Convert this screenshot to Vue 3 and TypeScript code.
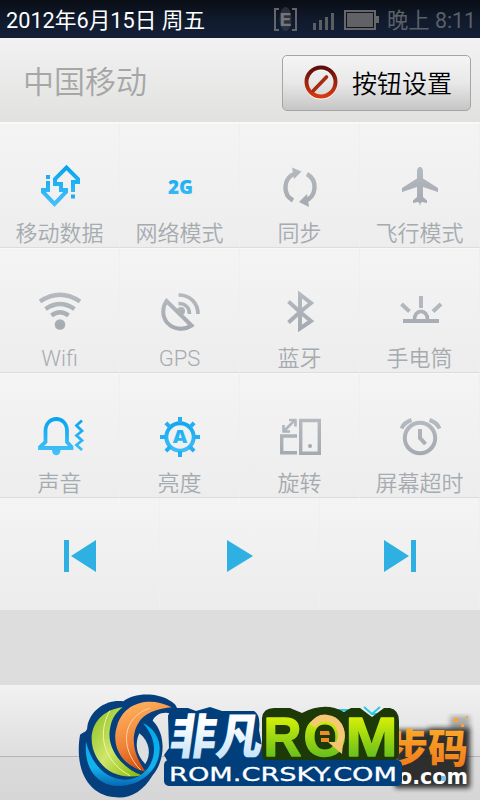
<script setup lang="ts">
import { ref } from 'vue'

interface Toggle {
	icon: string
	label: string
	active: boolean
}

const toggles = ref<Toggle[]>([
	{ icon: 'data', label: '移动数据', active: true },
	{ icon: 'network', label: '网络模式', active: true },
	{ icon: 'sync', label: '同步', active: false },
	{ icon: 'plane', label: '飞行模式', active: false },
	{ icon: 'wifi', label: 'Wifi', active: false },
	{ icon: 'gps', label: 'GPS', active: false },
	{ icon: 'bluetooth', label: '蓝牙', active: false },
	{ icon: 'torch', label: '手电筒', active: false },
	{ icon: 'sound', label: '声音', active: true },
	{ icon: 'brightness', label: '亮度', active: true },
	{ icon: 'rotate', label: '旋转', active: false },
	{ icon: 'timeout', label: '屏幕超时', active: false },
])

const teeth = [0, 45, 90, 135, 180, 225, 270, 315]

function toggle(item: Toggle) {
	item.active = !item.active
}
</script>

<template>
  <div class="screen">
    <div class="status">
      <span class="date">2012年6月15日 周五</span>
      <div class="indicators">
        <svg class="signals" width="106" height="26" viewBox="0 0 106 26">
          <path d="M5 3H1V24H5M18 3H22V24H18" fill="none" stroke="#62656a" stroke-width="2" />
          <ellipse cx="11.500" cy="13" rx="6" ry="12" fill="#3c414b" opacity=".6" />
          <text x="11.500" y="19.500" text-anchor="middle" class="edge">E</text>
          <path d="M39 17h3v7h-3zM45 14h3v10h-3zM51 11h3v13h-3zM57 7h3v17h-3z" fill="#5a5d62" />
          <rect x="71" y="5" width="30" height="18" fill="#101318" stroke="#65676a" stroke-width="2" />
          <rect x="73" y="7" width="26" height="14" fill="#606265" />
          <path d="M102 10h3v7h-3z" fill="#65676a" />
        </svg>
        <span class="time">晚上 8:11</span>
      </div>
    </div>

    <div class="header">
      <span class="carrier">中国移动</span>
      <button class="settings">
        <svg width="36" height="36" viewBox="0 0 36 36">
          <defs>
            <linearGradient id="ban" x1="0" y1="0" x2="0" y2="1">
              <stop offset="0" stop-color="#5c0d0d" />
              <stop offset="1" stop-color="#d63a10" />
            </linearGradient>
          </defs>
          <circle cx="18" cy="19" r="14.500" fill="none" stroke="#fff" stroke-width="4" />
          <circle cx="18" cy="18" r="14.500" fill="none" stroke="url(#ban)" stroke-width="4" />
          <path d="M10.500 26.500L23.500 13" stroke="#a62a14" stroke-width="3.600" stroke-linecap="round" />
        </svg>
        <span>按钮设置</span>
      </button>
    </div>

    <div class="grid">
      <div
        v-for="item in toggles"
        :key="item.icon"
        :class="['cell', { active: item.active }]"
        @click="toggle(item)"
      >
        <svg class="icon" width="60" height="50" viewBox="30 35 60 50">
          <defs>
            <linearGradient :id="`tint-${item.icon}`" gradientUnits="userSpaceOnUse" x1="0" y1="41" x2="0" y2="82">
              <stop offset="0" :stop-color="item.active ? '#06a3ee' : '#b5bbc0'" />
              <stop offset="1" :stop-color="item.active ? '#48c3fa' : '#a3a9af'" />
            </linearGradient>
          </defs>
          <g :stroke="`url(#tint-${item.icon})`" fill="none" stroke-width="4">
            <g v-if="item.icon === 'data'">
              <path d="M48 56V65H43V67L54.500 79L66 67V65H61V59H55V54L66.500 42.500L78 54V57H73V67" />
              <path d="M46 52h4M71 71.500h4" stroke="#22acf0" />
            </g>
            <text v-else-if="item.icon === 'network'" x="60.500" y="69" text-anchor="middle" class="glyph net" textLength="25" lengthAdjust="spacingAndGlyphs" :fill="`url(#tint-${item.icon})`">2G</text>
            <g v-else-if="item.icon === 'sync'">
              <path d="M53 75.500A15 15 0 0 1 55 48.500M67 49A15 15 0 0 1 65 76" stroke-width="4.400" />
              <path d="M52 42.500L61.500 46.500L54 54ZM69 82L59 77L67 69Z" stroke="none" :fill="`url(#tint-${item.icon})`" />
            </g>
            <path
              v-else-if="item.icon === 'plane'"
              d="M60 42C57.800 42 57 44.500 57 47V53.500L42 63V67L57 62V72L53 75.500V78L58 77L59.300 78L60 81L60.700 78L62 77L67 78V75.500L63 72V62L78 67V63L63 53.500V47C63 44.500 62.200 42 60 42Z"
              stroke="none"
              :fill="`url(#tint-${item.icon})`"
            />
            <g v-else-if="item.icon === 'wifi'">
              <path d="M40 51.500Q60 38 80 51.500M45.500 59Q60 49 74.500 59M51.500 65.500Q60 59 68.500 65.500" stroke-width="4.300" />
              <circle cx="60" cy="74.500" r="5.300" stroke="none" :fill="`url(#tint-${item.icon})`" />
            </g>
            <g v-else-if="item.icon === 'gps'">
              <path d="M46.500 51L71.500 75.500C63 81 53 79 47.500 73C41.500 66 42.500 57 46.500 51Z" />
              <path d="M58.500 45C70 45 78 53 78 64M58.500 53.500C65 53.500 69.500 57.500 69.500 64" stroke-width="3.600" />
              <circle cx="61" cy="61" r="2" />
            </g>
            <path v-else-if="item.icon === 'bluetooth'" d="M48.500 51.500L60 62L71 71L60 78.500V44.500L71 53L60 62L48.500 72.500" />
            <g v-else-if="item.icon === 'torch'">
              <path d="M61 46V58M41.500 54L49.500 61.500M81 54L73 61.500" stroke="#b2b8bd" />
              <path d="M43 71H79" />
              <path d="M54.500 70C54 58.500 68 58.500 67.500 70" stroke-width="3.600" />
            </g>
            <g v-else-if="item.icon === 'sound'">
              <path d="M40 73V72L45.500 67V56C45.500 40 67 40 67 56V67L71.500 72V73Z" stroke-width="3.800" />
              <path d="M52 75H60.500C60.500 82 52 82 52 75Z" stroke="none" :fill="`url(#tint-${item.icon})`" />
              <path d="M82 45.500L76.500 50.500L82 56L76.500 60.500L82 65.500L76.500 70L82 75" stroke-width="2.800" />
            </g>
            <g v-else-if="item.icon === 'brightness'">
              <circle cx="60" cy="62" r="13.700" />
              <path v-for="angle in teeth" :key="angle" d="M60 42V48" stroke="#25aef2" :transform="`rotate(${angle} 60 62)`" />
              <text x="60" y="68" text-anchor="middle" class="glyph auto" textLength="14.500" lengthAdjust="spacingAndGlyphs" :fill="`url(#tint-${item.icon})`">A</text>
            </g>
            <g v-else-if="item.icon === 'rotate'" stroke-width="3.400">
              <path d="M60.700 45.500H79.300V78.300H60.700ZM57 61H41.700V77.800H57" />
              <path d="M45 55L54 46M49 45H55.500V51.500M43.500 50V56.500H50" stroke-width="2.600" />
              <circle cx="70" cy="71" r="2" stroke="none" fill="#a3a9af" />
            </g>
            <g v-else>
              <circle cx="60" cy="63" r="15.200" />
              <path d="M60 54V63L65.500 69" />
              <path d="M41.500 53.500Q44 47.500 51.500 45M79.500 53.500Q77 47.500 69.500 45" />
            </g>
          </g>
        </svg>
        <span class="label">{{ item.label }}</span>
      </div>
    </div>

    <div class="media">
      <div class="control">
        <svg width="34" height="32" viewBox="0 0 34 32"><path d="M1 0h5v32H1zM33 0v32L8 16z" /></svg>
      </div>
      <div class="control">
        <svg width="26" height="32" viewBox="0 0 26 32"><path d="M0 0v32l26-16z" /></svg>
      </div>
      <div class="control">
        <svg width="34" height="32" viewBox="0 0 34 32"><path d="M28 0h5v32h-5zM1 0v32l25-16z" /></svg>
      </div>
    </div>

    <div class="gap" />

    <div class="bottom">
      <div class="bottomTop" />
      <svg class="brand" width="420" height="120" viewBox="60 680 420 120">
        <defs>
          <linearGradient id="ice" x1="0" y1="0" x2="0" y2="1">
            <stop offset=".35" stop-color="#fff" />
            <stop offset="1" stop-color="#b5dbf5" />
          </linearGradient>
          <linearGradient id="lime" gradientUnits="userSpaceOnUse" x1="0" y1="716" x2="0" y2="757">
            <stop offset="0" stop-color="#d9f206" />
            <stop offset="1" stop-color="#66bf1c" />
          </linearGradient>
          <linearGradient id="leaf" x1="0" y1="0" x2="1" y2="1">
            <stop offset="0" stop-color="#8abf20" />
            <stop offset=".5" stop-color="#cfe66a" />
            <stop offset="1" stop-color="#83b800" />
          </linearGradient>
          <linearGradient id="flame" x1=".3" y1="0" x2=".6" y2="1">
            <stop offset="0" stop-color="#ffb15e" />
            <stop offset=".55" stop-color="#ef8238" />
            <stop offset="1" stop-color="#c94407" />
          </linearGradient>
          <linearGradient id="sea" x1="0" y1="0" x2="0" y2="1">
            <stop offset="0" stop-color="#00a9e8" />
            <stop offset=".7" stop-color="#12b4ed" />
            <stop offset="1" stop-color="#0667b2" />
          </linearGradient>
          <linearGradient id="amber" x1="0" y1="0" x2="0" y2="1">
            <stop offset="0" stop-color="#ffb52d" />
            <stop offset="1" stop-color="#ee7216" />
          </linearGradient>
          <filter id="soft" x="-20%" y="-20%" width="140%" height="140%">
            <feGaussianBlur stdDeviation="2.500" />
          </filter>
        </defs>

        <!-- lower wordmark, partly hidden by the front one -->
        <path d="M334 710H356M364 707L372 714L380 707M371 714H388" stroke="#22ccec" stroke-width="2" fill="none" />
        <path d="M450 716H470V730H450Z" fill="#222" opacity=".3" filter="url(#soft)" />
        <path d="M395 730H425L431 728H470V788H395Z" fill="#1b1b1b" opacity=".9" filter="url(#soft)" />
        <text x="388" y="763" class="cjk back" fill="url(#amber)" textLength="80" lengthAdjust="spacingAndGlyphs">步码</text>
        <path d="M454 718h4v4h-4zM461 724h3v3h-3zM466 716h2v2h-2z" fill="#f7a42d" />
        <text x="398" y="784" class="domain" textLength="70" lengthAdjust="spacingAndGlyphs">o.com</text>
        <rect x="441.500" y="776" width="4" height="5" fill="#62caff" />

        <!-- swirl -->
        <g transform="translate(60 680) scale(.3333)">
          <path d="M60 165C68 155 82 158 82 140C90 90 140 57 190 64C220 40 285 35 330 62C362 78 358 112 330 100C305 94 285 106 278 122C318 160 318 240 277 287C250 335 205 357 170 352C90 350 42 275 60 165Z" fill="#053f7d" />
          <path d="M238 160C270 185 274 225 256 252C228 225 224 190 238 160Z" fill="#dedfe0" />
          <path d="M78 185C70 275 120 322 185 318C255 312 302 260 299 200C296 165 272 138 249 130C290 175 290 225 265 263C235 303 185 308 145 286C110 265 90 230 78 185Z" fill="url(#sea)" />
          <path d="M188 82C110 92 80 155 102 215C125 272 175 300 245 286C190 267 135 205 151 140C157 112 170 96 188 82Z" fill="url(#leaf)" />
          <path d="M150 92C110 160 130 245 210 287" fill="none" stroke="#eef5a5" stroke-width="3" />
          <path d="M335 82C275 50 195 62 172 135C148 205 195 263 257 275C220 225 206 165 243 118C265 94 300 86 335 82Z" fill="url(#flame)" />
          <path d="M270 84C185 112 178 205 242 270" fill="none" stroke="#ffd2a0" stroke-width="3" />
        </g>

        <!-- front wordmark -->
        <path d="M176 708H188L196 711L210 707L222 711H254Q261 715 259 730L265 762H168L164 755L169 748L168 716Q170 709 176 708Z" fill="#003e7c" />
        <text x="168" y="754" transform="translate(168 754) skewX(-8) translate(-168 -754)" class="cjk front" fill="url(#ice)" textLength="93" lengthAdjust="spacingAndGlyphs">非凡</text>
        <path d="M262 718Q263 708 274 708H290L302 713Q325 701 344 712L351 708H360L372 717L384 708H390Q399 710 399 721V754Q398 761 390 762H268Q261 760 262 752Z" fill="#1e3908" />
        <g class="rom">
          <text x="263.500" y="756" textLength="38" lengthAdjust="spacingAndGlyphs">R</text>
          <text x="303.500" y="756" textLength="43" lengthAdjust="spacingAndGlyphs">O</text>
          <text x="345.500" y="756" textLength="52" lengthAdjust="spacingAndGlyphs">M</text>
        </g>
        <path d="M313 726C319 714 334 717 339 726C343 734 341 742 337 747" stroke="#f6c873" stroke-width="7" fill="none" />
        <path d="M328 742L343 742L342 754Z" fill="#f3c56f" />
        <path d="M320 731h9l1 4h-10zM321 738h8v4h-8z" fill="#ef8b27" />
        <rect x="164" y="760" width="238" height="26" rx="5" fill="#003e7c" />
        <text x="169" y="780.500" class="site" textLength="228" lengthAdjust="spacingAndGlyphs">ROM.CRSKY.COM</text>
      </svg>
    </div>
  </div>
</template>

<style>
body {
  margin: 0;
}
</style>

<style scoped>
.screen {
  width: 480px;
  height: 800px;
  overflow: hidden;
  display: flex;
  flex-direction: column;
  font-family: Roboto, "Noto Sans CJK SC", sans-serif;
  background: #ddd;
}
.status {
  height: 38px;
  flex: none;
  display: flex;
  align-items: center;
  justify-content: space-between;
  padding: 0 4px 2px 6px;
  box-sizing: border-box;
  background: linear-gradient(#090d14, #101a2c 50%, #142038);
  font-size: 21.700px;
  white-space: nowrap;
}
.date {
  color: #fff;
}
.indicators {
  display: flex;
  align-items: center;
  gap: 7px;
  padding-top: 2px;
}
.time {
  font-size: 21.300px;
  color: #5c6067;
  padding-bottom: 2px;
}
.edge {
  font: bold 20px "Liberation Mono", monospace;
  fill: #74767a;
}
.header {
  height: 85px;
  flex: none;
  box-sizing: border-box;
  display: flex;
  align-items: center;
  justify-content: space-between;
  padding: 5px 9px 0 23px;
  background: linear-gradient(#f2f2f2, #e1e1e0);
  border-bottom: 1px solid #fafafa;
}
.carrier {
  font-size: 31px;
  font-weight: 350;
  color: #a6a6a6;
  padding-bottom: 6px;
}
.settings {
  width: 189px;
  height: 56px;
  padding: 0 18px 2px 20px;
  display: flex;
  align-items: center;
  justify-content: space-between;
  border: 1px solid #a5a5a5;
  border-radius: 5px;
  background: linear-gradient(#f5f5f5, #e8e8e8 50%, #c6c6c6);
  font-family: inherit;
  font-size: 25px;
  font-weight: 350;
  color: #000;
}
.grid {
  flex: none;
  display: grid;
  grid-template-columns: repeat(4, 1fr);
  grid-auto-rows: 125px;
}
.cell {
  display: flex;
  flex-direction: column;
  align-items: center;
  box-sizing: border-box;
  padding-top: 37px;
  background: linear-gradient(#f4f4f4, #ededed);
  border-bottom: 1px solid #dcdcdc;
  border-right: 1px solid #efefef;
  box-shadow: inset 0 1px #f8f8f8;
}
.icon {
  flex: none;
}
.glyph {
  font-family: "Open Sans", sans-serif;
  font-weight: 800;
  stroke: none;
}
.net {
  font-size: 20px;
}
.auto {
  font-size: 17px;
}
.label {
  font-size: 22px;
  line-height: 32px;
  margin-top: 8px;
  font-weight: 350;
  color: #a6abb0;
  white-space: nowrap;
}
.media {
  height: 112px;
  flex: none;
  display: grid;
  grid-template-columns: repeat(3, 1fr);
}
.control {
  display: flex;
  align-items: center;
  justify-content: center;
  padding-top: 4px;
  border-right: 1px solid #efefef;
  background: linear-gradient(#f4f4f4, #ececec);
}
.control path {
  fill: #2eb1e2;
}
.gap {
  height: 75px;
  flex: none;
  background: #ddd;
}
.bottom {
  height: 115px;
  flex: none;
  position: relative;
  background: linear-gradient(#e3e3e3, #d6d6d6);
}
.bottomTop {
  height: 71px;
  background: linear-gradient(#f2f2f2, #dedede);
  border-bottom: 1px solid #b5b5b5;
}
.brand {
  position: absolute;
  right: 0;
  bottom: 0;
}
.cjk {
  font-family: "Noto Sans CJK SC", sans-serif;
  font-weight: 900;
}
.front {
  font-size: 48px;
}
.back {
  font-size: 40px;
}
.domain {
  font: bold 21px "DejaVu Sans", sans-serif;
  fill: #fff;
}
.rom text {
  font: bold 56px "Liberation Sans", sans-serif;
  fill: url(#lime);
  stroke: url(#lime);
  stroke-width: 1.500px;
  stroke-linejoin: round;
}
.site {
  font: 19.500px "DejaVu Sans", sans-serif;
  fill: #fff;
  stroke: #fff;
  stroke-width: .3px;
}
</style>
